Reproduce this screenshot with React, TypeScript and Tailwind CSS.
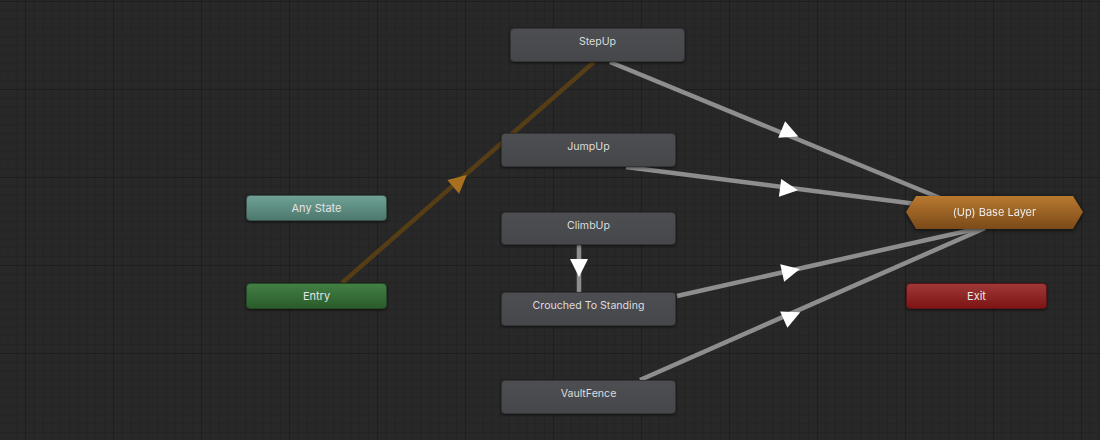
import React from "react";

const font = { fontFamily: "Inter, 'Noto Sans', sans-serif" };

function StateNode({ x, y, label, w = 175, h = 34 }: { x: number; y: number; label: string; w?: number; h?: number }) {
  return (
    <div
      className="absolute rounded-[4px] bg-[linear-gradient(#4d4e52,#46474b)] border border-[#343437] shadow-[0_1px_3px_rgba(0,0,0,0.6)] flex justify-center pt-[5px] text-[10.6px] text-[#dcdcdc]"
      style={{ left: x, top: y, width: w, height: h }}
    >
      {label}
    </div>
  );
}

function Arrow({ x, y, a, fill = "#ffffff" }: { x: number; y: number; a: number; fill?: string }) {
  return <path d="M9,0 L-9,-9 L-9,9 Z" fill={fill} transform={`translate(${x} ${y}) rotate(${a})`} />;
}

export default function App() {
  return (
    <div
      className="relative w-[1100px] h-[440px] overflow-hidden bg-[#282828] bg-[linear-gradient(#1e1e1e_1px,transparent_1px),linear-gradient(90deg,#1e1e1e_1px,transparent_1px),linear-gradient(#242424_1px,transparent_1px),linear-gradient(90deg,#242424_1px,transparent_1px)] bg-[length:88px_88px,88px_88px,8.8px_8.8px,8.8px_8.8px] bg-[position:25px_1px,25px_1px,25px_1px,25px_1px]"
      style={font}
    >
      <svg className="absolute inset-0" width="1100" height="440">
        <defs>
          <filter id="soft" x="-10%" y="-10%" width="120%" height="120%">
            <feGaussianBlur stdDeviation="0.7" />
          </filter>
        </defs>
        <g filter="url(#soft)" strokeLinecap="butt">
          <line x1="342" y1="283" x2="594" y2="62" stroke="#553c15" strokeWidth="4.5" />
          <line x1="610" y1="62" x2="940" y2="198" stroke="#8e8e8e" strokeWidth="4.5" />
          <line x1="626" y1="167" x2="940" y2="207" stroke="#8e8e8e" strokeWidth="4.5" />
          <line x1="579" y1="245" x2="579" y2="293" stroke="#8e8e8e" strokeWidth="4.5" />
          <line x1="677" y1="296" x2="980" y2="228" stroke="#8e8e8e" strokeWidth="4.5" />
          <line x1="640" y1="380" x2="985" y2="228" stroke="#8e8e8e" strokeWidth="4.5" />
        </g>
        <Arrow x={460} y={181} a={-41} fill="#a8701f" />
        <Arrow x={790} y={133} a={22.5} />
        <Arrow x={789} y={189} a={7.3} />
        <Arrow x={579} y={268} a={90} />
        <Arrow x={791} y={271} a={-12.6} />
        <Arrow x={792} y={316} a={-23.8} />
      </svg>

      <StateNode x={510} y={28} label="StepUp" />
      <StateNode x={501} y={133} label="JumpUp" />
      <StateNode x={501} y={212} label="ClimbUp" h={33} />
      <StateNode x={501} y={292} label="Crouched To Standing" />
      <StateNode x={501} y={380} label="VaultFence" />

      <div className="absolute left-[246px] top-[195px] w-[141px] h-[26px] rounded-[4px] bg-[linear-gradient(#6fa195,#4d786e)] border border-[#3a544d] shadow-[0_1px_3px_rgba(0,0,0,0.6)] flex items-center justify-center text-[11px] text-[#e4e4e4]">
        Any State
      </div>
      <div className="absolute left-[246px] top-[283px] w-[141px] h-[26px] rounded-[4px] bg-[linear-gradient(#437f44,#2a5c2b)] border border-[#234a24] shadow-[0_1px_3px_rgba(0,0,0,0.6)] flex items-center justify-center text-[11px] text-[#e4e4e4]">
        Entry
      </div>
      <div className="absolute left-[906px] top-[283px] w-[141px] h-[26px] rounded-[4px] bg-[linear-gradient(#a03838,#7e1414)] border border-[#5e1414] shadow-[0_1px_3px_rgba(0,0,0,0.6)] flex items-center justify-center text-[11px] text-[#e8e8e8]">
        Exit
      </div>

      <div className="absolute left-[906px] top-[196px] w-[177px] h-[33px] drop-shadow-[0_1px_2px_rgba(0,0,0,0.7)]">
        <div className="w-full h-full bg-[linear-gradient(#b8792f,#7b4a19)] [clip-path:polygon(10px_0,167px_0,177px_16px,167px_33px,10px_33px,0_16px)] flex items-center justify-center text-[11px] text-[#ececec]">
          (Up) Base Layer
        </div>
      </div>
    </div>
  );
}
